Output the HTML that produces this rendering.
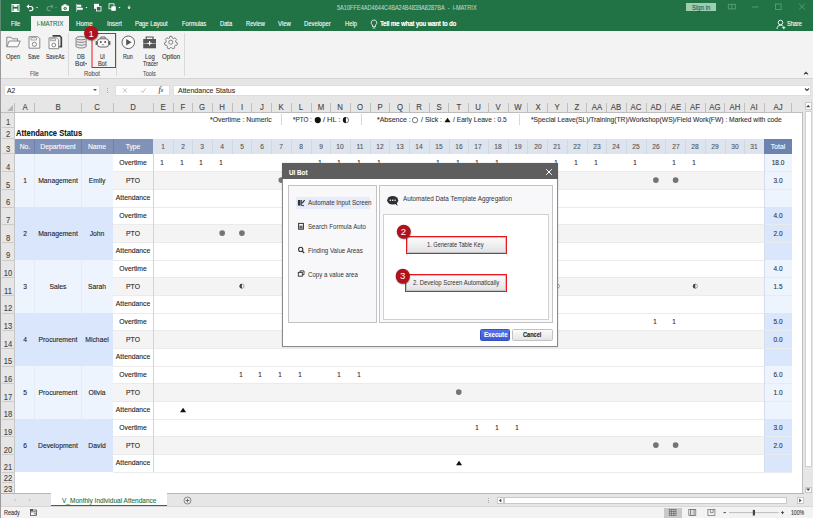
<!DOCTYPE html><html><head><meta charset="utf-8"><title>i-MATRIX</title><style>
*{box-sizing:border-box;margin:0;padding:0}
html,body{width:813px;height:518px;overflow:hidden;background:#fff}
body{font-family:"Liberation Sans","DejaVu Sans",sans-serif;font-size:7px;color:#333;position:relative}
.a{position:absolute}
.t{position:absolute;white-space:nowrap;line-height:1;-webkit-text-stroke:.1px currentColor}
.num{position:absolute;border-radius:50%;background:#b0121b;color:#fff;text-align:center;transform:translate(-50%,-50%);box-shadow:.4px .8px 1.2px rgba(0,0,0,.4)}
.redbox{position:absolute;border:1px solid #e8161d}
</style></head><body>
<div class="a" style="left:0.00px;top:0.00px;width:813.00px;height:31.40px;background:#217346;"></div>
<div class="a" style="left:0.00px;top:0.00px;width:1.20px;height:31.40px;background:#5f8a72;"></div>
<div class="a" style="left:0.00px;top:31.40px;width:1.20px;height:487.00px;background:#9b9b9b;"></div>
<svg class="a" style="left:0;top:0" width="140" height="16" viewBox="0 0 140 16" fill="none" stroke="#fff" stroke-width="1">
<rect x="12" y="4.500" width="7" height="7" /><rect x="13.500" y="4.500" width="4" height="2.300" fill="#fff" stroke="none"/><rect x="13.500" y="8.600" width="4" height="2.900" fill="#fff" stroke="none"/>
<path d="M27.500 6.500h3.300a2 2 0 0 1 0 4.200h-1.500" stroke-width="1.200"/><path d="M29 4.200l-2.600 2.300 2.600 2.300z" fill="#fff" stroke="none"/>
<path d="M36 7l2 0-1 1.300z" fill="#fff" stroke="none"/>
<g opacity=".3"><path d="M52.500 6.500h-3.300a2 2 0 0 0 0 4.200h1.500" stroke-width="1.200"/><path d="M51 4.200l2.600 2.300-2.600 2.300z" fill="#fff" stroke="none"/><path d="M55 7l2 0-1 1.300z" fill="#fff" stroke="none"/></g>
<rect x="61.500" y="5.500" width="7.500" height="5.500" fill="#fff" stroke="none" rx=".8"/><rect x="63.500" y="4.300" width="3" height="1.600" fill="#fff" stroke="none"/><circle cx="65.200" cy="8.300" r="1.600" fill="#217346" stroke="none"/><circle cx="65.200" cy="8.300" r=".7" fill="#fff" stroke="none"/>
<path d="M76.500 3.800v8M77 5h4v1.600h-4M77 8h5.500v1.600H77" fill="#fff" stroke-width=".6"/>
<path d="M85.500 7l2 0-1 1.300z" fill="#fff" stroke="none"/>
<rect x="94" y="3.800" width="5" height="5" fill="#fff" stroke="none"/><rect x="96.500" y="6.500" width="4.500" height="4.500" fill="#217346" stroke="#fff" stroke-width=".8"/>
<rect x="109" y="3.800" width="5" height="5" stroke-width=".8"/><rect x="111.300" y="6.300" width="4.500" height="4.500" fill="#fff" stroke="none"/>
<path d="M118.500 7l2 0-1 1.300z" fill="#fff" stroke="none"/>
<path d="M128 6.200h2.200M128 7.600l2.200 0-1.100 1.400z" fill="#fff" stroke-width=".6"/>
</svg>
<div class="t" style="left:336.50px;top:5px;font-size:6.6px;color:#b9d6c5;transform-origin:0 50%;transform:scaleX(0.849);">5A10FFE4AD4644C4BA24B4839A8287BA&nbsp; - &nbsp;i-MATRIX</div>
<div class="a" style="left:686.40px;top:2.70px;width:29.20px;height:8.80px;background:#9fcdb2;"></div>
<div class="t" style="left:691.80px;top:5px;font-size:6.9px;color:#1d5a37;transform-origin:0 50%;transform:scaleX(0.872);">Sign in</div>
<svg class="a" style="left:720px;top:0" width="93" height="14" viewBox="0 0 93 14" fill="none" stroke="#5fa37c" stroke-width=".8">
<rect x="8.300" y="4.300" width="7" height="4.600"/><path d="M11.800 4.300v4.600"/>
<path d="M32 7h6.500"/>
<rect x="55.500" y="4" width="5.600" height="5.600"/>
<path d="M79 3.800l5.800 5.800M84.800 3.800l-5.800 5.800"/>
</svg>
<div class="a" style="left:31.30px;top:16.00px;width:37.80px;height:16.00px;background:#f3f3f3;"></div>
<div class="t" style="left:10.60px;top:20px;font-size:7.2px;color:#fff;transform-origin:0 50%;transform:scaleX(0.776);">File</div>
<div class="t" style="left:76.30px;top:20px;font-size:7.2px;color:#fff;transform-origin:0 50%;transform:scaleX(0.869);">Home</div>
<div class="t" style="left:106.60px;top:20px;font-size:7.2px;color:#fff;transform-origin:0 50%;transform:scaleX(0.827);">Insert</div>
<div class="t" style="left:134.80px;top:20px;font-size:7.2px;color:#fff;transform-origin:0 50%;transform:scaleX(0.809);">Page Layout</div>
<div class="t" style="left:181.50px;top:20px;font-size:7.2px;color:#fff;transform-origin:0 50%;transform:scaleX(0.810);">Formulas</div>
<div class="t" style="left:219.80px;top:20px;font-size:7.2px;color:#fff;transform-origin:0 50%;transform:scaleX(0.802);">Data</div>
<div class="t" style="left:245.50px;top:20px;font-size:7.2px;color:#fff;transform-origin:0 50%;transform:scaleX(0.796);">Review</div>
<div class="t" style="left:277.90px;top:20px;font-size:7.2px;color:#fff;transform-origin:0 50%;transform:scaleX(0.840);">View</div>
<div class="t" style="left:304.00px;top:20px;font-size:7.2px;color:#fff;transform-origin:0 50%;transform:scaleX(0.817);">Developer</div>
<div class="t" style="left:344.80px;top:20px;font-size:7.2px;color:#fff;transform-origin:0 50%;transform:scaleX(0.810);">Help</div>
<div class="t" style="left:36.90px;top:20px;font-size:7.2px;color:#217346;transform-origin:0 50%;transform:scaleX(0.858);">i-MATRIX</div>
<svg class="a" style="left:370px;top:18.500px" width="8" height="11" viewBox="0 0 8 11" fill="none" stroke="#fff" stroke-width=".8"><path d="M4 1a2.700 2.700 0 0 1 1.500 5v1.600h-3v-1.600A2.700 2.700 0 0 1 4 1zM2.700 9h2.600"/></svg>
<div class="t" style="left:380.00px;top:20px;font-size:7.2px;color:#fff;transform-origin:0 50%;transform:scaleX(0.858);text-shadow:.15px 0 0 #fff;">Tell me what you want to do</div>
<svg class="a" style="left:775.500px;top:18.500px" width="11" height="11" viewBox="0 0 11 11" fill="none" stroke="#fff" stroke-width=".9"><circle cx="4.500" cy="3.500" r="2.300"/><path d="M1 10c0-2.400 1.400-3.800 3.500-3.800 1 0 1.800.3 2.400.8M7.800 7.200v3M6.300 8.700h3"/></svg>
<div class="t" style="left:786.50px;top:20px;font-size:7.2px;color:#fff;transform-origin:0 50%;transform:scaleX(0.781);">Share</div>
<div class="a" style="left:1.00px;top:31.00px;width:812.00px;height:47.30px;background:#f3f3f3;"></div>
<div class="a" style="left:1.00px;top:78.00px;width:812.00px;height:0.80px;background:#d4d4d4;"></div>
<div class="a" style="left:68.10px;top:32.50px;width:0.80px;height:43.00px;background:#dadada;"></div>
<div class="a" style="left:115.60px;top:32.50px;width:0.80px;height:43.00px;background:#dadada;"></div>
<div class="a" style="left:183.50px;top:32.50px;width:0.80px;height:43.00px;background:#dadada;"></div>
<svg class="a" style="left:0;top:32px" width="190" height="22" viewBox="0 0 190 22" fill="none" stroke="#6e6e6e" stroke-width=".8">
<path d="M6.800 14.800V5.200h4.200l1.200 1.600h5.300v2.200"/><path d="M6.800 14.800l2.400-5.800H20.200l-2.400 5.800z" fill="#fafafa"/>
<path d="M29 4.700h8.800l2 2v9.500H29z" fill="#fafafa"/><rect x="31" y="5.800" width="5.400" height="2.200" stroke-width=".6"/><circle cx="34.400" cy="12.300" r="2.100"/>
<path d="M52.500 3.900h7.200l1.600 1.600v9.200h-2" stroke="#444" stroke-width="1.700"/>
<path d="M49 5.800h7.600l2 2v8.900H49z" fill="#fafafa"/><rect x="50.800" y="6.900" width="4.600" height="1.900" stroke-width=".6"/><circle cx="53.800" cy="13" r="1.900"/>
<g stroke="#666" fill="#ececec"><path d="M76 12v2.300c0 .9 2.200 1.700 5.100 1.700s5.100-.8 5.100-1.700V12"/><path d="M76 9.200v2.300c0 .9 2.200 1.700 5.100 1.700s5.100-.8 5.100-1.700V9.200"/><path d="M76 6.400v2.300c0 .9 2.200 1.700 5.100 1.700s5.100-.8 5.100-1.700V6.400"/><ellipse cx="81.100" cy="6.200" rx="5.100" ry="1.700"/></g>
<g stroke="#666"><rect x="97.500" y="6.800" width="11" height="8.200" rx="2.500" fill="#fafafa" stroke-width="1"/><path d="M100.800 6.500V5h4.400v1.500" stroke-width="1"/><circle cx="100.800" cy="10" r=".9" fill="#444" stroke="none"/><circle cx="105.200" cy="10" r=".9" fill="#444" stroke="none"/><path d="M101.800 12.700h2.400" stroke-width=".7"/><path d="M96.300 9v4M109.700 9v4" stroke-width="1.400"/></g>
<circle cx="128.300" cy="10.300" r="6.300" fill="#fafafa" stroke="#555" stroke-width=".9"/><path d="M126.200 7l5.400 3.300-5.400 3.300z" fill="#555" stroke="none"/>
<g><rect x="143.200" y="7" width="12.800" height="9.300" fill="#555" stroke="none"/><path d="M146.200 7V5h6.800v2" stroke="#555" stroke-width="1.200"/><path d="M143.200 11.500h12.800" stroke="#f3f3f3" stroke-width=".5"/><path d="M149.600 9v4.600M147.300 11.300h4.600" stroke="#fff" stroke-width="1.100"/></g>
<g stroke="#777" stroke-width="1" transform="translate(170.800 10.200) scale(.9) translate(-170.800 -10.200)"><circle cx="170.800" cy="10.200" r="2.300"/><path d="M169.500 3.700h2.600l.4 1.900 1.300.6 1.700-.9 1.700 2-1.100 1.500.3 1.400 1.800.8-.6 2.500-1.900.1-.9 1.100.4 1.900-2.300 1.100-1.200-1.500h-1.500l-1.200 1.500-2.300-1.100.4-1.900-.9-1.100-1.900-.1-.6-2.500 1.800-.8.300-1.400-1.100-1.500 1.700-2 1.700.9 1.300-.6z"/></g>
</svg>
<div class="t" style="left:5.80px;top:53px;font-size:7.3px;color:#333;transform-origin:0 50%;transform:scaleX(0.795);">Open</div>
<div class="t" style="left:28.30px;top:53px;font-size:7.3px;color:#333;transform-origin:0 50%;transform:scaleX(0.703);">Save</div>
<div class="t" style="left:45.90px;top:53px;font-size:7.3px;color:#333;transform-origin:0 50%;transform:scaleX(0.731);">SaveAs</div>
<div class="t" style="left:77.20px;top:53px;font-size:7.3px;color:#333;transform-origin:0 50%;transform:scaleX(0.759);">DB</div>
<div class="t" style="left:75.00px;top:60px;font-size:7.3px;color:#333;transform-origin:0 50%;transform:scaleX(0.903);">Bot</div>
<div class="t" style="left:99.60px;top:53px;font-size:7.3px;color:#333;transform-origin:0 50%;transform:scaleX(0.685);">UI</div>
<div class="t" style="left:98.10px;top:60px;font-size:7.3px;color:#333;transform-origin:0 50%;transform:scaleX(0.785);">Bot</div>
<div class="t" style="left:123.20px;top:53px;font-size:7.3px;color:#333;transform-origin:0 50%;transform:scaleX(0.732);">Run</div>
<div class="t" style="left:144.90px;top:53px;font-size:7.3px;color:#333;transform-origin:0 50%;transform:scaleX(0.805);">Log</div>
<div class="t" style="left:142.50px;top:60px;font-size:7.3px;color:#333;transform-origin:0 50%;transform:scaleX(0.716);">Tracer</div>
<div class="t" style="left:161.50px;top:53px;font-size:7.3px;color:#333;transform-origin:0 50%;transform:scaleX(0.846);">Option</div>
<div class="a" style="left:85.300px;top:62.800px;width:0;height:0;border-left:1.700px solid transparent;border-right:1.700px solid transparent;border-top:2px solid #555"></div>
<div class="t" style="left:30.10px;top:71px;font-size:6.8px;color:#555;transform-origin:0 50%;transform:scaleX(0.785);">File</div>
<div class="t" style="left:84.00px;top:71px;font-size:6.8px;color:#555;transform-origin:0 50%;transform:scaleX(0.876);">Robot</div>
<div class="t" style="left:143.20px;top:71px;font-size:6.8px;color:#555;transform-origin:0 50%;transform:scaleX(0.806);">Tools</div>
<svg class="a" style="left:801px;top:70px" width="10" height="6" viewBox="0 0 10 6" fill="none" stroke="#444" stroke-width="1.100"><path d="M3 4.300l2-2 2 2"/></svg>
<svg class="a" style="left:0;top:0" width="200" height="80" viewBox="0 0 200 80"><rect x="92" y="33.500" width="23.500" height="34" fill="none" stroke="#e8161d" stroke-width="1"/></svg>
<div class="num" style="left:91.100px;top:33.400px;width:13.800px;height:13.800px;line-height:15px;font-size:9.500px">1</div>
<div class="a" style="left:1.00px;top:78.80px;width:812.00px;height:22.40px;background:#e6e6e6;"></div>
<div class="a" style="left:3.50px;top:84.50px;width:96.00px;height:11.80px;background:#fff;border:.5px solid #dedede"></div>
<div class="t" style="left:6.50px;top:87px;font-size:7.3px;color:#333;transform-origin:0 50%;transform:scaleX(0.930);">A2</div>
<div class="a" style="left:92.500px;top:89.300px;width:0;height:0;border-left:2px solid transparent;border-right:2px solid transparent;border-top:2.300px solid #555"></div>
<div class="a" style="left:106.50px;top:87.80px;width:0.90px;height:0.90px;background:#aaa;"></div>
<div class="a" style="left:106.50px;top:90.00px;width:0.90px;height:0.90px;background:#aaa;"></div>
<div class="a" style="left:106.50px;top:92.20px;width:0.90px;height:0.90px;background:#aaa;"></div>
<div class="a" style="left:115.10px;top:84.50px;width:55.20px;height:11.80px;background:#fff;border:.5px solid #dedede"></div>
<svg class="a" style="left:115px;top:84px" width="56" height="13" viewBox="0 0 56 13" fill="none" stroke="#b0b0b0" stroke-width=".8"><path d="M8 4.300l3.800 4.200M11.800 4.300l-3.800 4.200"/><path d="M26 6.700l1.700 1.900 3.100-4.300"/></svg>
<div class="t" style="left:158.500px;top:86px;font-size:8px;font-style:italic;font-family:'Liberation Serif',serif;color:#444">f<span style="font-size:5.500px">x</span></div>
<div class="a" style="left:172.70px;top:84.50px;width:638.00px;height:11.80px;background:#fff;border:.5px solid #dedede"></div>
<div class="t" style="left:178.00px;top:87px;font-size:7.3px;color:#333;transform-origin:0 50%;transform:scaleX(0.960);">Attendance Status</div>
<svg class="a" style="left:802.500px;top:87.300px" width="8" height="6" viewBox="0 0 8 6" fill="none" stroke="#444" stroke-width="1.100"><path d="M2 1.500l2 2 2-2"/></svg>
<div class="a" style="left:1.00px;top:101.20px;width:812.00px;height:11.20px;background:#e6e6e6;"></div>
<div class="a" style="left:1.00px;top:111.90px;width:801.60px;height:0.80px;background:#bdbdbd;"></div>
<div class="a" style="left:6.500px;top:104.500px;width:0;height:0;border-left:6.500px solid transparent;border-bottom:6.500px solid #b5b5b5"></div>
<div class="t" style="left:24.70px;top:104px;font-size:8.2px;color:#444;transform:translateX(-50%) scaleX(0.950);">A</div>
<div class="a" style="left:34.20px;top:102.80px;width:0.80px;height:9.00px;background:#c0c0c0;"></div>
<div class="t" style="left:58.05px;top:104px;font-size:8.2px;color:#444;transform:translateX(-50%) scaleX(0.950);">B</div>
<div class="a" style="left:81.10px;top:102.80px;width:0.80px;height:9.00px;background:#c0c0c0;"></div>
<div class="t" style="left:97.45px;top:104px;font-size:8.2px;color:#444;transform:translateX(-50%) scaleX(0.950);">C</div>
<div class="a" style="left:113.00px;top:102.80px;width:0.80px;height:9.00px;background:#c0c0c0;"></div>
<div class="t" style="left:133.30px;top:104px;font-size:8.2px;color:#444;transform:translateX(-50%) scaleX(0.950);">D</div>
<div class="a" style="left:152.80px;top:102.80px;width:0.80px;height:9.00px;background:#c0c0c0;"></div>
<div class="t" style="left:163.06px;top:104px;font-size:8.2px;color:#444;transform:translateX(-50%) scaleX(0.950);">E</div>
<div class="a" style="left:172.51px;top:102.80px;width:0.80px;height:9.00px;background:#c0c0c0;"></div>
<div class="t" style="left:182.77px;top:104px;font-size:8.2px;color:#444;transform:translateX(-50%) scaleX(0.950);">F</div>
<div class="a" style="left:192.23px;top:102.80px;width:0.80px;height:9.00px;background:#c0c0c0;"></div>
<div class="t" style="left:202.48px;top:104px;font-size:8.2px;color:#444;transform:translateX(-50%) scaleX(0.950);">G</div>
<div class="a" style="left:211.94px;top:102.80px;width:0.80px;height:9.00px;background:#c0c0c0;"></div>
<div class="t" style="left:222.20px;top:104px;font-size:8.2px;color:#444;transform:translateX(-50%) scaleX(0.950);">H</div>
<div class="a" style="left:231.65px;top:102.80px;width:0.80px;height:9.00px;background:#c0c0c0;"></div>
<div class="t" style="left:241.91px;top:104px;font-size:8.2px;color:#444;transform:translateX(-50%) scaleX(0.950);">I</div>
<div class="a" style="left:251.36px;top:102.80px;width:0.80px;height:9.00px;background:#c0c0c0;"></div>
<div class="t" style="left:261.62px;top:104px;font-size:8.2px;color:#444;transform:translateX(-50%) scaleX(0.950);">J</div>
<div class="a" style="left:271.08px;top:102.80px;width:0.80px;height:9.00px;background:#c0c0c0;"></div>
<div class="t" style="left:281.33px;top:104px;font-size:8.2px;color:#444;transform:translateX(-50%) scaleX(0.950);">K</div>
<div class="a" style="left:290.79px;top:102.80px;width:0.80px;height:9.00px;background:#c0c0c0;"></div>
<div class="t" style="left:301.05px;top:104px;font-size:8.2px;color:#444;transform:translateX(-50%) scaleX(0.950);">L</div>
<div class="a" style="left:310.50px;top:102.80px;width:0.80px;height:9.00px;background:#c0c0c0;"></div>
<div class="t" style="left:320.76px;top:104px;font-size:8.2px;color:#444;transform:translateX(-50%) scaleX(0.950);">M</div>
<div class="a" style="left:330.22px;top:102.80px;width:0.80px;height:9.00px;background:#c0c0c0;"></div>
<div class="t" style="left:340.47px;top:104px;font-size:8.2px;color:#444;transform:translateX(-50%) scaleX(0.950);">N</div>
<div class="a" style="left:349.93px;top:102.80px;width:0.80px;height:9.00px;background:#c0c0c0;"></div>
<div class="t" style="left:360.19px;top:104px;font-size:8.2px;color:#444;transform:translateX(-50%) scaleX(0.950);">O</div>
<div class="a" style="left:369.64px;top:102.80px;width:0.80px;height:9.00px;background:#c0c0c0;"></div>
<div class="t" style="left:379.90px;top:104px;font-size:8.2px;color:#444;transform:translateX(-50%) scaleX(0.950);">P</div>
<div class="a" style="left:389.35px;top:102.80px;width:0.80px;height:9.00px;background:#c0c0c0;"></div>
<div class="t" style="left:399.61px;top:104px;font-size:8.2px;color:#444;transform:translateX(-50%) scaleX(0.950);">Q</div>
<div class="a" style="left:409.07px;top:102.80px;width:0.80px;height:9.00px;background:#c0c0c0;"></div>
<div class="t" style="left:419.32px;top:104px;font-size:8.2px;color:#444;transform:translateX(-50%) scaleX(0.950);">R</div>
<div class="a" style="left:428.78px;top:102.80px;width:0.80px;height:9.00px;background:#c0c0c0;"></div>
<div class="t" style="left:439.04px;top:104px;font-size:8.2px;color:#444;transform:translateX(-50%) scaleX(0.950);">S</div>
<div class="a" style="left:448.49px;top:102.80px;width:0.80px;height:9.00px;background:#c0c0c0;"></div>
<div class="t" style="left:458.75px;top:104px;font-size:8.2px;color:#444;transform:translateX(-50%) scaleX(0.950);">T</div>
<div class="a" style="left:468.21px;top:102.80px;width:0.80px;height:9.00px;background:#c0c0c0;"></div>
<div class="t" style="left:478.46px;top:104px;font-size:8.2px;color:#444;transform:translateX(-50%) scaleX(0.950);">U</div>
<div class="a" style="left:487.92px;top:102.80px;width:0.80px;height:9.00px;background:#c0c0c0;"></div>
<div class="t" style="left:498.18px;top:104px;font-size:8.2px;color:#444;transform:translateX(-50%) scaleX(0.950);">V</div>
<div class="a" style="left:507.63px;top:102.80px;width:0.80px;height:9.00px;background:#c0c0c0;"></div>
<div class="t" style="left:517.89px;top:104px;font-size:8.2px;color:#444;transform:translateX(-50%) scaleX(0.950);">W</div>
<div class="a" style="left:527.35px;top:102.80px;width:0.80px;height:9.00px;background:#c0c0c0;"></div>
<div class="t" style="left:537.60px;top:104px;font-size:8.2px;color:#444;transform:translateX(-50%) scaleX(0.950);">X</div>
<div class="a" style="left:547.06px;top:102.80px;width:0.80px;height:9.00px;background:#c0c0c0;"></div>
<div class="t" style="left:557.31px;top:104px;font-size:8.2px;color:#444;transform:translateX(-50%) scaleX(0.950);">Y</div>
<div class="a" style="left:566.77px;top:102.80px;width:0.80px;height:9.00px;background:#c0c0c0;"></div>
<div class="t" style="left:577.03px;top:104px;font-size:8.2px;color:#444;transform:translateX(-50%) scaleX(0.950);">Z</div>
<div class="a" style="left:586.48px;top:102.80px;width:0.80px;height:9.00px;background:#c0c0c0;"></div>
<div class="t" style="left:596.74px;top:104px;font-size:8.2px;color:#444;transform:translateX(-50%) scaleX(0.950);">AA</div>
<div class="a" style="left:606.20px;top:102.80px;width:0.80px;height:9.00px;background:#c0c0c0;"></div>
<div class="t" style="left:616.45px;top:104px;font-size:8.2px;color:#444;transform:translateX(-50%) scaleX(0.950);">AB</div>
<div class="a" style="left:625.91px;top:102.80px;width:0.80px;height:9.00px;background:#c0c0c0;"></div>
<div class="t" style="left:636.17px;top:104px;font-size:8.2px;color:#444;transform:translateX(-50%) scaleX(0.950);">AC</div>
<div class="a" style="left:645.62px;top:102.80px;width:0.80px;height:9.00px;background:#c0c0c0;"></div>
<div class="t" style="left:655.88px;top:104px;font-size:8.2px;color:#444;transform:translateX(-50%) scaleX(0.950);">AD</div>
<div class="a" style="left:665.34px;top:102.80px;width:0.80px;height:9.00px;background:#c0c0c0;"></div>
<div class="t" style="left:675.59px;top:104px;font-size:8.2px;color:#444;transform:translateX(-50%) scaleX(0.950);">AE</div>
<div class="a" style="left:685.05px;top:102.80px;width:0.80px;height:9.00px;background:#c0c0c0;"></div>
<div class="t" style="left:695.30px;top:104px;font-size:8.2px;color:#444;transform:translateX(-50%) scaleX(0.950);">AF</div>
<div class="a" style="left:704.76px;top:102.80px;width:0.80px;height:9.00px;background:#c0c0c0;"></div>
<div class="t" style="left:715.02px;top:104px;font-size:8.2px;color:#444;transform:translateX(-50%) scaleX(0.950);">AG</div>
<div class="a" style="left:724.47px;top:102.80px;width:0.80px;height:9.00px;background:#c0c0c0;"></div>
<div class="t" style="left:734.73px;top:104px;font-size:8.2px;color:#444;transform:translateX(-50%) scaleX(0.950);">AH</div>
<div class="a" style="left:744.19px;top:102.80px;width:0.80px;height:9.00px;background:#c0c0c0;"></div>
<div class="t" style="left:754.44px;top:104px;font-size:8.2px;color:#444;transform:translateX(-50%) scaleX(0.950);">AI</div>
<div class="a" style="left:763.90px;top:102.80px;width:0.80px;height:9.00px;background:#c0c0c0;"></div>
<div class="t" style="left:778.00px;top:104px;font-size:8.2px;color:#444;transform:translateX(-50%) scaleX(0.950);">AJ</div>
<div class="a" style="left:791.30px;top:102.80px;width:0.80px;height:9.00px;background:#c0c0c0;"></div>
<div class="a" style="left:14.40px;top:102.80px;width:0.80px;height:9.00px;background:#c0c0c0;"></div>
<div class="a" style="left:1.00px;top:112.50px;width:13.80px;height:380.70px;background:#e6e6e6;"></div>
<div class="a" style="left:14.40px;top:112.50px;width:0.80px;height:380.70px;background:#c6c6c6;"></div>
<div class="t" style="left:7.80px;top:119px;font-size:8.2px;color:#444;transform:translateX(-50%) scaleX(0.930);">1</div>
<div class="a" style="left:2.00px;top:126.70px;width:12.50px;height:0.80px;background:#cbcbcb;"></div>
<div class="t" style="left:7.80px;top:131px;font-size:8.2px;color:#444;transform:translateX(-50%) scaleX(0.930);">2</div>
<div class="a" style="left:2.00px;top:138.20px;width:12.50px;height:0.80px;background:#cbcbcb;"></div>
<div class="t" style="left:7.80px;top:146px;font-size:8.2px;color:#444;transform:translateX(-50%) scaleX(0.930);">3</div>
<div class="a" style="left:2.00px;top:153.40px;width:12.50px;height:0.80px;background:#cbcbcb;"></div>
<div class="t" style="left:7.80px;top:164px;font-size:8.2px;color:#444;transform:translateX(-50%) scaleX(0.930);">4</div>
<div class="a" style="left:2.00px;top:171.17px;width:12.50px;height:0.80px;background:#cbcbcb;"></div>
<div class="t" style="left:7.80px;top:182px;font-size:8.2px;color:#444;transform:translateX(-50%) scaleX(0.930);">5</div>
<div class="a" style="left:2.00px;top:188.83px;width:12.50px;height:0.80px;background:#cbcbcb;"></div>
<div class="t" style="left:7.80px;top:199px;font-size:8.2px;color:#444;transform:translateX(-50%) scaleX(0.930);">6</div>
<div class="a" style="left:2.00px;top:206.50px;width:12.50px;height:0.80px;background:#cbcbcb;"></div>
<div class="t" style="left:7.80px;top:217px;font-size:8.2px;color:#444;transform:translateX(-50%) scaleX(0.930);">7</div>
<div class="a" style="left:2.00px;top:224.17px;width:12.50px;height:0.80px;background:#cbcbcb;"></div>
<div class="t" style="left:7.80px;top:235px;font-size:8.2px;color:#444;transform:translateX(-50%) scaleX(0.930);">8</div>
<div class="a" style="left:2.00px;top:241.83px;width:12.50px;height:0.80px;background:#cbcbcb;"></div>
<div class="t" style="left:7.80px;top:252px;font-size:8.2px;color:#444;transform:translateX(-50%) scaleX(0.930);">9</div>
<div class="a" style="left:2.00px;top:259.50px;width:12.50px;height:0.80px;background:#cbcbcb;"></div>
<div class="t" style="left:7.80px;top:270px;font-size:8.2px;color:#444;transform:translateX(-50%) scaleX(0.930);">10</div>
<div class="a" style="left:2.00px;top:277.17px;width:12.50px;height:0.80px;background:#cbcbcb;"></div>
<div class="t" style="left:7.80px;top:288px;font-size:8.2px;color:#444;transform:translateX(-50%) scaleX(0.930);">11</div>
<div class="a" style="left:2.00px;top:294.83px;width:12.50px;height:0.80px;background:#cbcbcb;"></div>
<div class="t" style="left:7.80px;top:305px;font-size:8.2px;color:#444;transform:translateX(-50%) scaleX(0.930);">12</div>
<div class="a" style="left:2.00px;top:312.50px;width:12.50px;height:0.80px;background:#cbcbcb;"></div>
<div class="t" style="left:7.80px;top:323px;font-size:8.2px;color:#444;transform:translateX(-50%) scaleX(0.930);">13</div>
<div class="a" style="left:2.00px;top:330.17px;width:12.50px;height:0.80px;background:#cbcbcb;"></div>
<div class="t" style="left:7.80px;top:341px;font-size:8.2px;color:#444;transform:translateX(-50%) scaleX(0.930);">14</div>
<div class="a" style="left:2.00px;top:347.83px;width:12.50px;height:0.80px;background:#cbcbcb;"></div>
<div class="t" style="left:7.80px;top:358px;font-size:8.2px;color:#444;transform:translateX(-50%) scaleX(0.930);">15</div>
<div class="a" style="left:2.00px;top:365.50px;width:12.50px;height:0.80px;background:#cbcbcb;"></div>
<div class="t" style="left:7.80px;top:376px;font-size:8.2px;color:#444;transform:translateX(-50%) scaleX(0.930);">16</div>
<div class="a" style="left:2.00px;top:383.17px;width:12.50px;height:0.80px;background:#cbcbcb;"></div>
<div class="t" style="left:7.80px;top:394px;font-size:8.2px;color:#444;transform:translateX(-50%) scaleX(0.930);">17</div>
<div class="a" style="left:2.00px;top:400.83px;width:12.50px;height:0.80px;background:#cbcbcb;"></div>
<div class="t" style="left:7.80px;top:411px;font-size:8.2px;color:#444;transform:translateX(-50%) scaleX(0.930);">18</div>
<div class="a" style="left:2.00px;top:418.50px;width:12.50px;height:0.80px;background:#cbcbcb;"></div>
<div class="t" style="left:7.80px;top:429px;font-size:8.2px;color:#444;transform:translateX(-50%) scaleX(0.930);">19</div>
<div class="a" style="left:2.00px;top:436.17px;width:12.50px;height:0.80px;background:#cbcbcb;"></div>
<div class="t" style="left:7.80px;top:447px;font-size:8.2px;color:#444;transform:translateX(-50%) scaleX(0.930);">20</div>
<div class="a" style="left:2.00px;top:453.83px;width:12.50px;height:0.80px;background:#cbcbcb;"></div>
<div class="t" style="left:7.80px;top:464px;font-size:8.2px;color:#444;transform:translateX(-50%) scaleX(0.930);">21</div>
<div class="a" style="left:2.00px;top:471.50px;width:12.50px;height:0.80px;background:#cbcbcb;"></div>
<div class="t" style="left:7.80px;top:475px;font-size:8.2px;color:#444;transform:translateX(-50%) scaleX(0.930);">22</div>
<div class="a" style="left:2.00px;top:482.20px;width:12.50px;height:0.80px;background:#cbcbcb;"></div>
<div class="t" style="left:7.80px;top:486px;font-size:8.2px;color:#444;transform:translateX(-50%) scaleX(0.930);">23</div>
<div class="a" style="left:2.00px;top:492.80px;width:12.50px;height:0.80px;background:#cbcbcb;"></div>
<div class="t" style="left:209.50px;top:116px;font-size:7.2px;color:#333;transform-origin:0 50%;transform:scaleX(0.954);">*Overtime : Numeric</div>
<div class="t" style="left:293.00px;top:116px;font-size:7.2px;color:#333;transform-origin:0 50%;transform:scaleX(0.876);">*PTO :</div>
<div class="t" style="left:323.10px;top:116px;font-size:7.2px;color:#333;transform-origin:0 50%;transform:scaleX(1.021);">/ HL :</div>
<div class="t" style="left:376.90px;top:116px;font-size:7.2px;color:#333;transform-origin:0 50%;transform:scaleX(0.971);">*Absence :</div>
<div class="t" style="left:420.80px;top:116px;font-size:7.2px;color:#333;transform-origin:0 50%;transform:scaleX(0.977);">/ Sick :</div>
<div class="t" style="left:453.00px;top:116px;font-size:7.2px;color:#333;transform-origin:0 50%;transform:scaleX(0.927);">/ Early Leave : 0.5</div>
<div class="t" style="left:531.00px;top:116px;font-size:7.2px;color:#333;transform-origin:0 50%;transform:scaleX(0.933);">*Special Leave(SL)/Training(TR)/Workshop(WS)/Field Work(FW) : Marked with code</div>
<div class="a" style="left:281.30px;top:114.00px;width:0.70px;height:11.00px;background:#d9d9d9;"></div>
<div class="a" style="left:360.50px;top:114.00px;width:0.70px;height:11.00px;background:#d9d9d9;"></div>
<div class="a" style="left:518.80px;top:114.00px;width:0.70px;height:11.00px;background:#d9d9d9;"></div>
<div class="t" style="left:16.30px;top:129px;font-size:8.6px;color:#111;font-weight:bold;transform-origin:0 50%;transform:scaleX(0.877);">Attendance Status</div>
<div class="a" style="left:14.80px;top:138.60px;width:138.40px;height:15.20px;background:#8092b7;"></div>
<div class="a" style="left:153.20px;top:138.60px;width:611.10px;height:15.20px;background:#dde4ee;"></div>
<div class="a" style="left:764.30px;top:138.60px;width:27.40px;height:15.20px;background:#6d82ae;"></div>
<div class="a" style="left:34.30px;top:138.60px;width:0.70px;height:15.20px;background:#6e82ab;"></div>
<div class="a" style="left:81.20px;top:138.60px;width:0.70px;height:15.20px;background:#6e82ab;"></div>
<div class="a" style="left:113.10px;top:138.60px;width:0.70px;height:15.20px;background:#6e82ab;"></div>
<div class="t" style="left:24.70px;top:143px;font-size:7.3px;color:#fff;transform:translateX(-50%) scaleX(0.930);">No.</div>
<div class="t" style="left:58.05px;top:143px;font-size:7.3px;color:#fff;transform:translateX(-50%) scaleX(0.930);">Department</div>
<div class="t" style="left:97.45px;top:143px;font-size:7.3px;color:#fff;transform:translateX(-50%) scaleX(0.930);">Name</div>
<div class="t" style="left:133.30px;top:143px;font-size:7.3px;color:#fff;transform:translateX(-50%) scaleX(0.930);">Type</div>
<div class="t" style="left:163.06px;top:143px;font-size:7.0px;color:#555;transform:translateX(-50%) scaleX(0.950);">1</div>
<div class="t" style="left:182.77px;top:143px;font-size:7.0px;color:#555;transform:translateX(-50%) scaleX(0.950);">2</div>
<div class="a" style="left:172.61px;top:138.60px;width:0.60px;height:15.20px;background:#d0d8e4;"></div>
<div class="t" style="left:202.48px;top:143px;font-size:7.0px;color:#555;transform:translateX(-50%) scaleX(0.950);">3</div>
<div class="a" style="left:192.33px;top:138.60px;width:0.60px;height:15.20px;background:#d0d8e4;"></div>
<div class="t" style="left:222.20px;top:143px;font-size:7.0px;color:#555;transform:translateX(-50%) scaleX(0.950);">4</div>
<div class="a" style="left:212.04px;top:138.60px;width:0.60px;height:15.20px;background:#d0d8e4;"></div>
<div class="t" style="left:241.91px;top:143px;font-size:7.0px;color:#555;transform:translateX(-50%) scaleX(0.950);">5</div>
<div class="a" style="left:231.75px;top:138.60px;width:0.60px;height:15.20px;background:#d0d8e4;"></div>
<div class="t" style="left:261.62px;top:143px;font-size:7.0px;color:#555;transform:translateX(-50%) scaleX(0.950);">6</div>
<div class="a" style="left:251.46px;top:138.60px;width:0.60px;height:15.20px;background:#d0d8e4;"></div>
<div class="t" style="left:281.33px;top:143px;font-size:7.0px;color:#555;transform:translateX(-50%) scaleX(0.950);">7</div>
<div class="a" style="left:271.18px;top:138.60px;width:0.60px;height:15.20px;background:#d0d8e4;"></div>
<div class="t" style="left:301.05px;top:143px;font-size:7.0px;color:#555;transform:translateX(-50%) scaleX(0.950);">8</div>
<div class="a" style="left:290.89px;top:138.60px;width:0.60px;height:15.20px;background:#d0d8e4;"></div>
<div class="t" style="left:320.76px;top:143px;font-size:7.0px;color:#555;transform:translateX(-50%) scaleX(0.950);">9</div>
<div class="a" style="left:310.60px;top:138.60px;width:0.60px;height:15.20px;background:#d0d8e4;"></div>
<div class="t" style="left:340.47px;top:143px;font-size:7.0px;color:#555;transform:translateX(-50%) scaleX(0.950);">10</div>
<div class="a" style="left:330.32px;top:138.60px;width:0.60px;height:15.20px;background:#d0d8e4;"></div>
<div class="t" style="left:360.19px;top:143px;font-size:7.0px;color:#555;transform:translateX(-50%) scaleX(0.950);">11</div>
<div class="a" style="left:350.03px;top:138.60px;width:0.60px;height:15.20px;background:#d0d8e4;"></div>
<div class="t" style="left:379.90px;top:143px;font-size:7.0px;color:#555;transform:translateX(-50%) scaleX(0.950);">12</div>
<div class="a" style="left:369.74px;top:138.60px;width:0.60px;height:15.20px;background:#d0d8e4;"></div>
<div class="t" style="left:399.61px;top:143px;font-size:7.0px;color:#555;transform:translateX(-50%) scaleX(0.950);">13</div>
<div class="a" style="left:389.45px;top:138.60px;width:0.60px;height:15.20px;background:#d0d8e4;"></div>
<div class="t" style="left:419.32px;top:143px;font-size:7.0px;color:#555;transform:translateX(-50%) scaleX(0.950);">14</div>
<div class="a" style="left:409.17px;top:138.60px;width:0.60px;height:15.20px;background:#d0d8e4;"></div>
<div class="t" style="left:439.04px;top:143px;font-size:7.0px;color:#555;transform:translateX(-50%) scaleX(0.950);">15</div>
<div class="a" style="left:428.88px;top:138.60px;width:0.60px;height:15.20px;background:#d0d8e4;"></div>
<div class="t" style="left:458.75px;top:143px;font-size:7.0px;color:#555;transform:translateX(-50%) scaleX(0.950);">16</div>
<div class="a" style="left:448.59px;top:138.60px;width:0.60px;height:15.20px;background:#d0d8e4;"></div>
<div class="t" style="left:478.46px;top:143px;font-size:7.0px;color:#555;transform:translateX(-50%) scaleX(0.950);">17</div>
<div class="a" style="left:468.31px;top:138.60px;width:0.60px;height:15.20px;background:#d0d8e4;"></div>
<div class="t" style="left:498.18px;top:143px;font-size:7.0px;color:#555;transform:translateX(-50%) scaleX(0.950);">18</div>
<div class="a" style="left:488.02px;top:138.60px;width:0.60px;height:15.20px;background:#d0d8e4;"></div>
<div class="t" style="left:517.89px;top:143px;font-size:7.0px;color:#555;transform:translateX(-50%) scaleX(0.950);">19</div>
<div class="a" style="left:507.73px;top:138.60px;width:0.60px;height:15.20px;background:#d0d8e4;"></div>
<div class="t" style="left:537.60px;top:143px;font-size:7.0px;color:#555;transform:translateX(-50%) scaleX(0.950);">20</div>
<div class="a" style="left:527.45px;top:138.60px;width:0.60px;height:15.20px;background:#d0d8e4;"></div>
<div class="t" style="left:557.31px;top:143px;font-size:7.0px;color:#555;transform:translateX(-50%) scaleX(0.950);">21</div>
<div class="a" style="left:547.16px;top:138.60px;width:0.60px;height:15.20px;background:#d0d8e4;"></div>
<div class="t" style="left:577.03px;top:143px;font-size:7.0px;color:#555;transform:translateX(-50%) scaleX(0.950);">22</div>
<div class="a" style="left:566.87px;top:138.60px;width:0.60px;height:15.20px;background:#d0d8e4;"></div>
<div class="t" style="left:596.74px;top:143px;font-size:7.0px;color:#555;transform:translateX(-50%) scaleX(0.950);">23</div>
<div class="a" style="left:586.58px;top:138.60px;width:0.60px;height:15.20px;background:#d0d8e4;"></div>
<div class="t" style="left:616.45px;top:143px;font-size:7.0px;color:#555;transform:translateX(-50%) scaleX(0.950);">24</div>
<div class="a" style="left:606.30px;top:138.60px;width:0.60px;height:15.20px;background:#d0d8e4;"></div>
<div class="t" style="left:636.17px;top:143px;font-size:7.0px;color:#555;transform:translateX(-50%) scaleX(0.950);">25</div>
<div class="a" style="left:626.01px;top:138.60px;width:0.60px;height:15.20px;background:#d0d8e4;"></div>
<div class="t" style="left:655.88px;top:143px;font-size:7.0px;color:#555;transform:translateX(-50%) scaleX(0.950);">26</div>
<div class="a" style="left:645.72px;top:138.60px;width:0.60px;height:15.20px;background:#d0d8e4;"></div>
<div class="t" style="left:675.59px;top:143px;font-size:7.0px;color:#555;transform:translateX(-50%) scaleX(0.950);">27</div>
<div class="a" style="left:665.44px;top:138.60px;width:0.60px;height:15.20px;background:#d0d8e4;"></div>
<div class="t" style="left:695.30px;top:143px;font-size:7.0px;color:#555;transform:translateX(-50%) scaleX(0.950);">28</div>
<div class="a" style="left:685.15px;top:138.60px;width:0.60px;height:15.20px;background:#d0d8e4;"></div>
<div class="t" style="left:715.02px;top:143px;font-size:7.0px;color:#555;transform:translateX(-50%) scaleX(0.950);">29</div>
<div class="a" style="left:704.86px;top:138.60px;width:0.60px;height:15.20px;background:#d0d8e4;"></div>
<div class="t" style="left:734.73px;top:143px;font-size:7.0px;color:#555;transform:translateX(-50%) scaleX(0.950);">30</div>
<div class="a" style="left:724.57px;top:138.60px;width:0.60px;height:15.20px;background:#d0d8e4;"></div>
<div class="t" style="left:754.44px;top:143px;font-size:7.0px;color:#555;transform:translateX(-50%) scaleX(0.950);">31</div>
<div class="a" style="left:744.29px;top:138.60px;width:0.60px;height:15.20px;background:#d0d8e4;"></div>
<div class="t" style="left:778.00px;top:143px;font-size:7.3px;color:#fff;transform:translateX(-50%) scaleX(0.930);">Total</div>
<div class="a" style="left:14.80px;top:153.90px;width:98.60px;height:53.00px;background:#eef4fd;"></div>
<div class="a" style="left:764.30px;top:153.90px;width:27.40px;height:53.00px;background:#eef4fd;"></div>
<div class="a" style="left:34.30px;top:153.90px;width:0.60px;height:53.00px;background:#e2ebf8;"></div>
<div class="a" style="left:81.20px;top:153.90px;width:0.60px;height:53.00px;background:#e2ebf8;"></div>
<div class="t" style="left:24.70px;top:177px;font-size:7.0px;color:#222;transform:translateX(-50%) scaleX(0.950);">1</div>
<div class="t" style="left:58.05px;top:177px;font-size:7.3px;color:#222;transform:translateX(-50%) scaleX(0.930);">Management</div>
<div class="t" style="left:97.45px;top:177px;font-size:7.3px;color:#222;transform:translateX(-50%) scaleX(0.930);">Emily</div>
<div class="t" style="left:133.30px;top:159px;font-size:7.3px;color:#222;transform:translateX(-50%) scaleX(0.930);">Overtime</div>
<div class="a" style="left:113.40px;top:171.27px;width:678.30px;height:0.60px;background:#ebebeb;"></div>
<div class="t" style="left:778.00px;top:159px;font-size:7.0px;color:#333;transform:translateX(-50%) scaleX(0.930);">18.0</div>
<div class="a" style="left:113.40px;top:171.57px;width:650.90px;height:17.67px;background:#f4f4f4;"></div>
<div class="t" style="left:133.30px;top:177px;font-size:7.3px;color:#222;transform:translateX(-50%) scaleX(0.930);">PTO</div>
<div class="a" style="left:113.40px;top:188.93px;width:678.30px;height:0.60px;background:#ebebeb;"></div>
<div class="t" style="left:778.00px;top:177px;font-size:7.0px;color:#333;transform:translateX(-50%) scaleX(0.930);">3.0</div>
<div class="t" style="left:133.30px;top:194px;font-size:7.3px;color:#222;transform:translateX(-50%) scaleX(0.930);">Attendance</div>
<div class="a" style="left:113.40px;top:206.60px;width:678.30px;height:0.60px;background:#ebebeb;"></div>
<div class="a" style="left:14.80px;top:206.90px;width:98.60px;height:53.00px;background:#d9e6fb;"></div>
<div class="a" style="left:764.30px;top:206.90px;width:27.40px;height:53.00px;background:#d9e6fb;"></div>
<div class="t" style="left:24.70px;top:230px;font-size:7.0px;color:#222;transform:translateX(-50%) scaleX(0.950);">2</div>
<div class="t" style="left:58.05px;top:230px;font-size:7.3px;color:#222;transform:translateX(-50%) scaleX(0.930);">Management</div>
<div class="t" style="left:97.45px;top:230px;font-size:7.3px;color:#222;transform:translateX(-50%) scaleX(0.930);">John</div>
<div class="t" style="left:133.30px;top:212px;font-size:7.3px;color:#222;transform:translateX(-50%) scaleX(0.930);">Overtime</div>
<div class="a" style="left:113.40px;top:224.27px;width:678.30px;height:0.60px;background:#ebebeb;"></div>
<div class="t" style="left:778.00px;top:212px;font-size:7.0px;color:#333;transform:translateX(-50%) scaleX(0.930);">4.0</div>
<div class="a" style="left:113.40px;top:224.57px;width:650.90px;height:17.67px;background:#f4f4f4;"></div>
<div class="t" style="left:133.30px;top:230px;font-size:7.3px;color:#222;transform:translateX(-50%) scaleX(0.930);">PTO</div>
<div class="a" style="left:113.40px;top:241.93px;width:678.30px;height:0.60px;background:#ebebeb;"></div>
<div class="t" style="left:778.00px;top:230px;font-size:7.0px;color:#333;transform:translateX(-50%) scaleX(0.930);">2.0</div>
<div class="t" style="left:133.30px;top:247px;font-size:7.3px;color:#222;transform:translateX(-50%) scaleX(0.930);">Attendance</div>
<div class="a" style="left:113.40px;top:259.60px;width:678.30px;height:0.60px;background:#ebebeb;"></div>
<div class="a" style="left:14.80px;top:259.90px;width:98.60px;height:53.00px;background:#eef4fd;"></div>
<div class="a" style="left:764.30px;top:259.90px;width:27.40px;height:53.00px;background:#eef4fd;"></div>
<div class="a" style="left:34.30px;top:259.90px;width:0.60px;height:53.00px;background:#e2ebf8;"></div>
<div class="a" style="left:81.20px;top:259.90px;width:0.60px;height:53.00px;background:#e2ebf8;"></div>
<div class="t" style="left:24.70px;top:283px;font-size:7.0px;color:#222;transform:translateX(-50%) scaleX(0.950);">3</div>
<div class="t" style="left:58.05px;top:283px;font-size:7.3px;color:#222;transform:translateX(-50%) scaleX(0.930);">Sales</div>
<div class="t" style="left:97.45px;top:283px;font-size:7.3px;color:#222;transform:translateX(-50%) scaleX(0.930);">Sarah</div>
<div class="t" style="left:133.30px;top:265px;font-size:7.3px;color:#222;transform:translateX(-50%) scaleX(0.930);">Overtime</div>
<div class="a" style="left:113.40px;top:277.27px;width:678.30px;height:0.60px;background:#ebebeb;"></div>
<div class="t" style="left:778.00px;top:265px;font-size:7.0px;color:#333;transform:translateX(-50%) scaleX(0.930);">4.0</div>
<div class="a" style="left:113.40px;top:277.57px;width:650.90px;height:17.67px;background:#f4f4f4;"></div>
<div class="t" style="left:133.30px;top:283px;font-size:7.3px;color:#222;transform:translateX(-50%) scaleX(0.930);">PTO</div>
<div class="a" style="left:113.40px;top:294.93px;width:678.30px;height:0.60px;background:#ebebeb;"></div>
<div class="t" style="left:778.00px;top:283px;font-size:7.0px;color:#333;transform:translateX(-50%) scaleX(0.930);">1.5</div>
<div class="t" style="left:133.30px;top:300px;font-size:7.3px;color:#222;transform:translateX(-50%) scaleX(0.930);">Attendance</div>
<div class="a" style="left:113.40px;top:312.60px;width:678.30px;height:0.60px;background:#ebebeb;"></div>
<div class="a" style="left:14.80px;top:312.90px;width:98.60px;height:53.00px;background:#d9e6fb;"></div>
<div class="a" style="left:764.30px;top:312.90px;width:27.40px;height:53.00px;background:#d9e6fb;"></div>
<div class="t" style="left:24.70px;top:336px;font-size:7.0px;color:#222;transform:translateX(-50%) scaleX(0.950);">4</div>
<div class="t" style="left:58.05px;top:336px;font-size:7.3px;color:#222;transform:translateX(-50%) scaleX(0.930);">Procurement</div>
<div class="t" style="left:97.45px;top:336px;font-size:7.3px;color:#222;transform:translateX(-50%) scaleX(0.930);">Michael</div>
<div class="t" style="left:133.30px;top:318px;font-size:7.3px;color:#222;transform:translateX(-50%) scaleX(0.930);">Overtime</div>
<div class="a" style="left:113.40px;top:330.27px;width:678.30px;height:0.60px;background:#ebebeb;"></div>
<div class="t" style="left:778.00px;top:318px;font-size:7.0px;color:#333;transform:translateX(-50%) scaleX(0.930);">5.0</div>
<div class="a" style="left:113.40px;top:330.57px;width:650.90px;height:17.67px;background:#f4f4f4;"></div>
<div class="t" style="left:133.30px;top:336px;font-size:7.3px;color:#222;transform:translateX(-50%) scaleX(0.930);">PTO</div>
<div class="a" style="left:113.40px;top:347.93px;width:678.30px;height:0.60px;background:#ebebeb;"></div>
<div class="t" style="left:778.00px;top:336px;font-size:7.0px;color:#333;transform:translateX(-50%) scaleX(0.930);">0.0</div>
<div class="t" style="left:133.30px;top:353px;font-size:7.3px;color:#222;transform:translateX(-50%) scaleX(0.930);">Attendance</div>
<div class="a" style="left:113.40px;top:365.60px;width:678.30px;height:0.60px;background:#ebebeb;"></div>
<div class="a" style="left:14.80px;top:365.90px;width:98.60px;height:53.00px;background:#eef4fd;"></div>
<div class="a" style="left:764.30px;top:365.90px;width:27.40px;height:53.00px;background:#eef4fd;"></div>
<div class="a" style="left:34.30px;top:365.90px;width:0.60px;height:53.00px;background:#e2ebf8;"></div>
<div class="a" style="left:81.20px;top:365.90px;width:0.60px;height:53.00px;background:#e2ebf8;"></div>
<div class="t" style="left:24.70px;top:389px;font-size:7.0px;color:#222;transform:translateX(-50%) scaleX(0.950);">5</div>
<div class="t" style="left:58.05px;top:389px;font-size:7.3px;color:#222;transform:translateX(-50%) scaleX(0.930);">Procurement</div>
<div class="t" style="left:97.45px;top:389px;font-size:7.3px;color:#222;transform:translateX(-50%) scaleX(0.930);">Olivia</div>
<div class="t" style="left:133.30px;top:371px;font-size:7.3px;color:#222;transform:translateX(-50%) scaleX(0.930);">Overtime</div>
<div class="a" style="left:113.40px;top:383.27px;width:678.30px;height:0.60px;background:#ebebeb;"></div>
<div class="t" style="left:778.00px;top:371px;font-size:7.0px;color:#333;transform:translateX(-50%) scaleX(0.930);">6.0</div>
<div class="a" style="left:113.40px;top:383.57px;width:650.90px;height:17.67px;background:#f4f4f4;"></div>
<div class="t" style="left:133.30px;top:389px;font-size:7.3px;color:#222;transform:translateX(-50%) scaleX(0.930);">PTO</div>
<div class="a" style="left:113.40px;top:400.93px;width:678.30px;height:0.60px;background:#ebebeb;"></div>
<div class="t" style="left:778.00px;top:389px;font-size:7.0px;color:#333;transform:translateX(-50%) scaleX(0.930);">1.0</div>
<div class="t" style="left:133.30px;top:406px;font-size:7.3px;color:#222;transform:translateX(-50%) scaleX(0.930);">Attendance</div>
<div class="a" style="left:113.40px;top:418.60px;width:678.30px;height:0.60px;background:#ebebeb;"></div>
<div class="a" style="left:14.80px;top:418.90px;width:98.60px;height:53.00px;background:#d9e6fb;"></div>
<div class="a" style="left:764.30px;top:418.90px;width:27.40px;height:53.00px;background:#d9e6fb;"></div>
<div class="t" style="left:24.70px;top:442px;font-size:7.0px;color:#222;transform:translateX(-50%) scaleX(0.950);">6</div>
<div class="t" style="left:58.05px;top:442px;font-size:7.3px;color:#222;transform:translateX(-50%) scaleX(0.930);">Development</div>
<div class="t" style="left:97.45px;top:442px;font-size:7.3px;color:#222;transform:translateX(-50%) scaleX(0.930);">David</div>
<div class="t" style="left:133.30px;top:424px;font-size:7.3px;color:#222;transform:translateX(-50%) scaleX(0.930);">Overtime</div>
<div class="a" style="left:113.40px;top:436.27px;width:678.30px;height:0.60px;background:#ebebeb;"></div>
<div class="t" style="left:778.00px;top:424px;font-size:7.0px;color:#333;transform:translateX(-50%) scaleX(0.930);">3.0</div>
<div class="a" style="left:113.40px;top:436.57px;width:650.90px;height:17.67px;background:#f4f4f4;"></div>
<div class="t" style="left:133.30px;top:442px;font-size:7.3px;color:#222;transform:translateX(-50%) scaleX(0.930);">PTO</div>
<div class="a" style="left:113.40px;top:453.93px;width:678.30px;height:0.60px;background:#ebebeb;"></div>
<div class="t" style="left:778.00px;top:442px;font-size:7.0px;color:#333;transform:translateX(-50%) scaleX(0.930);">2.0</div>
<div class="t" style="left:133.30px;top:459px;font-size:7.3px;color:#222;transform:translateX(-50%) scaleX(0.930);">Attendance</div>
<div class="a" style="left:113.40px;top:471.60px;width:678.30px;height:0.60px;background:#ebebeb;"></div>
<div class="a" style="left:153.10px;top:153.90px;width:0.70px;height:318.00px;background:#ccd5e3;"></div>
<div class="a" style="left:763.90px;top:153.90px;width:0.60px;height:318.00px;background:#d5deeb;"></div>
<div class="t" style="left:161.86px;top:160px;font-size:6.5px;color:#222;transform:translateX(-50%) scaleX(0.950);">1</div>
<div class="t" style="left:181.57px;top:160px;font-size:6.5px;color:#222;transform:translateX(-50%) scaleX(0.950);">1</div>
<div class="t" style="left:201.28px;top:160px;font-size:6.5px;color:#222;transform:translateX(-50%) scaleX(0.950);">1</div>
<div class="t" style="left:221.00px;top:160px;font-size:6.5px;color:#222;transform:translateX(-50%) scaleX(0.950);">1</div>
<div class="t" style="left:319.56px;top:160px;font-size:6.5px;color:#222;transform:translateX(-50%) scaleX(0.950);">1</div>
<div class="t" style="left:339.27px;top:160px;font-size:6.5px;color:#222;transform:translateX(-50%) scaleX(0.950);">1</div>
<div class="t" style="left:358.99px;top:160px;font-size:6.5px;color:#222;transform:translateX(-50%) scaleX(0.950);">1</div>
<div class="t" style="left:378.70px;top:160px;font-size:6.5px;color:#222;transform:translateX(-50%) scaleX(0.950);">1</div>
<div class="t" style="left:437.84px;top:160px;font-size:6.5px;color:#222;transform:translateX(-50%) scaleX(0.950);">1</div>
<div class="t" style="left:457.55px;top:160px;font-size:6.5px;color:#222;transform:translateX(-50%) scaleX(0.950);">1</div>
<div class="t" style="left:477.26px;top:160px;font-size:6.5px;color:#222;transform:translateX(-50%) scaleX(0.950);">1</div>
<div class="t" style="left:496.98px;top:160px;font-size:6.5px;color:#222;transform:translateX(-50%) scaleX(0.950);">1</div>
<div class="t" style="left:556.11px;top:160px;font-size:6.5px;color:#222;transform:translateX(-50%) scaleX(0.950);">1</div>
<div class="t" style="left:575.83px;top:160px;font-size:6.5px;color:#222;transform:translateX(-50%) scaleX(0.950);">1</div>
<div class="t" style="left:595.54px;top:160px;font-size:6.5px;color:#222;transform:translateX(-50%) scaleX(0.950);">1</div>
<div class="t" style="left:634.97px;top:160px;font-size:6.5px;color:#222;transform:translateX(-50%) scaleX(0.950);">1</div>
<div class="t" style="left:674.39px;top:160px;font-size:6.5px;color:#222;transform:translateX(-50%) scaleX(0.950);">1</div>
<div class="t" style="left:694.10px;top:160px;font-size:6.5px;color:#222;transform:translateX(-50%) scaleX(0.950);">1</div>
<div class="t" style="left:654.68px;top:319px;font-size:6.5px;color:#222;transform:translateX(-50%) scaleX(0.950);">1</div>
<div class="t" style="left:674.39px;top:319px;font-size:6.5px;color:#222;transform:translateX(-50%) scaleX(0.950);">1</div>
<div class="t" style="left:240.71px;top:372px;font-size:6.5px;color:#222;transform:translateX(-50%) scaleX(0.950);">1</div>
<div class="t" style="left:260.42px;top:372px;font-size:6.5px;color:#222;transform:translateX(-50%) scaleX(0.950);">1</div>
<div class="t" style="left:280.13px;top:372px;font-size:6.5px;color:#222;transform:translateX(-50%) scaleX(0.950);">1</div>
<div class="t" style="left:299.85px;top:372px;font-size:6.5px;color:#222;transform:translateX(-50%) scaleX(0.950);">1</div>
<div class="t" style="left:339.27px;top:372px;font-size:6.5px;color:#222;transform:translateX(-50%) scaleX(0.950);">1</div>
<div class="t" style="left:358.99px;top:372px;font-size:6.5px;color:#222;transform:translateX(-50%) scaleX(0.950);">1</div>
<div class="t" style="left:477.26px;top:425px;font-size:6.5px;color:#222;transform:translateX(-50%) scaleX(0.950);">1</div>
<div class="t" style="left:496.98px;top:425px;font-size:6.5px;color:#222;transform:translateX(-50%) scaleX(0.950);">1</div>
<div class="t" style="left:516.69px;top:425px;font-size:6.5px;color:#222;transform:translateX(-50%) scaleX(0.950);">1</div>
<svg class="a" style="left:0;top:0" width="813" height="518" viewBox="0 0 813 518"><circle cx="317.80" cy="120.10" r="3.10" fill="#111"/><circle cx="345.90" cy="120.10" r="2.70" fill="#fff" stroke="#222" stroke-width=".6"/><path d="M345.90 117.10a3.00 3.00 0 0 0 0 6.00z" fill="#111"/><circle cx="415.00" cy="120.10" r="2.70" fill="#fff" stroke="#333" stroke-width=".65"/><path d="M444.40 122.23h6.20l-3.10 -4.46z" fill="#111"/><circle cx="281.33" cy="180.10" r="2.85" fill="#747474"/><circle cx="655.88" cy="180.10" r="2.85" fill="#747474"/><circle cx="675.59" cy="180.10" r="2.85" fill="#747474"/><circle cx="222.20" cy="233.10" r="2.85" fill="#747474"/><circle cx="241.91" cy="233.10" r="2.85" fill="#747474"/><circle cx="458.75" cy="392.10" r="2.85" fill="#747474"/><circle cx="655.88" cy="445.10" r="2.85" fill="#747474"/><circle cx="675.59" cy="445.10" r="2.85" fill="#747474"/><circle cx="241.91" cy="286.20" r="2.10" fill="#fff" stroke="#666" stroke-width=".6"/><path d="M241.91 283.80a2.40 2.40 0 0 0 0 4.80z" fill="#444"/><circle cx="557.31" cy="286.20" r="2.10" fill="#fff" stroke="#666" stroke-width=".6"/><path d="M557.31 283.80a2.40 2.40 0 0 0 0 4.80z" fill="#444"/><circle cx="695.30" cy="286.20" r="2.10" fill="#fff" stroke="#666" stroke-width=".6"/><path d="M695.30 283.80a2.40 2.40 0 0 0 0 4.80z" fill="#444"/><path d="M180.02 412.17h6.100l-3.050 -4.400z" fill="#111"/><path d="M456.00 465.17h6.100l-3.050 -4.400z" fill="#111"/></svg>
<div class="a" style="left:802.20px;top:112.50px;width:0.80px;height:381.00px;background:#bdbdbd;"></div>
<div class="a" style="left:803.00px;top:101.20px;width:10.40px;height:392.30px;background:#e6e6e6;"></div>
<div class="a" style="left:804.60px;top:102.30px;width:7.10px;height:7.70px;background:#fff;border:.5px solid #c8c8c8"></div>
<svg class="a" style="left:0;top:0" width="813" height="518" viewBox="0 0 813 518"><path d="M806.100 107.200h4.200l-2.100-2.500z" fill="#444"/></svg>
<div class="a" style="left:804.60px;top:110.50px;width:7.10px;height:356.50px;background:#fff;border:.5px solid #cfcfcf"></div>
<div class="a" style="left:804.60px;top:486.50px;width:7.10px;height:6.50px;background:#fff;border:.5px solid #c8c8c8"></div>
<svg class="a" style="left:0;top:0" width="813" height="518" viewBox="0 0 813 518"><path d="M806.100 488.600h4.200l-2.100 2.500z" fill="#444"/></svg>
<div class="a" style="left:1.00px;top:493.20px;width:812.00px;height:13.30px;background:#e6e6e6;"></div>
<div class="a" style="left:1.00px;top:493.00px;width:802.60px;height:0.70px;background:#b5b5b5;"></div>
<div class="a" style="left:51.20px;top:492.80px;width:116.10px;height:12.00px;background:#fff;"></div>
<div class="a" style="left:51.20px;top:504.50px;width:116.10px;height:1.30px;background:#217346;"></div>
<div class="t" style="left:61.70px;top:497px;font-size:7.2px;color:#217346;transform-origin:0 50%;transform:scaleX(0.906);">V_Monthly Individual Attendance</div>
<svg class="a" style="left:10px;top:495px" width="30" height="10" viewBox="0 0 30 10" fill="none" stroke="#bdbdbd" stroke-width=".8"><path d="M5.900 3.600l-1.300 1.400 1.300 1.400M18.800 3.600l1.300 1.400-1.300 1.400"/></svg>
<svg class="a" style="left:183.100px;top:495.500px" width="9" height="9" viewBox="0 0 9 9" fill="none" stroke="#666" stroke-width=".7"><circle cx="4.500" cy="4.500" r="3.500"/><path d="M4.500 2.700v3.600M2.700 4.500h3.600" stroke-width=".9"/></svg>
<div class="a" style="left:504.30px;top:496.60px;width:283.00px;height:7.80px;background:#fff;border:.5px solid #c8c8c8"></div>
<div class="a" style="left:496.50px;top:496.60px;width:7.30px;height:7.80px;background:#fff;border:.5px solid #c8c8c8"></div>
<svg class="a" style="left:0;top:0" width="813" height="518" viewBox="0 0 813 518"><path d="M501.300 498.600v3.800l-2.400-1.900z" fill="#444"/></svg>
<div class="a" style="left:488.20px;top:498.00px;width:0.80px;height:0.80px;background:#aaa;"></div>
<div class="a" style="left:488.20px;top:500.00px;width:0.80px;height:0.80px;background:#aaa;"></div>
<div class="a" style="left:488.20px;top:502.00px;width:0.80px;height:0.80px;background:#aaa;"></div>
<div class="a" style="left:796.80px;top:496.60px;width:6.80px;height:7.80px;background:#fff;border:.5px solid #c8c8c8"></div>
<svg class="a" style="left:0;top:0" width="813" height="518" viewBox="0 0 813 518"><path d="M799.200 498.600v3.800l2.400-1.900z" fill="#444"/></svg>
<div class="a" style="left:1.00px;top:506.50px;width:812.00px;height:11.50px;background:#f3f3f3;"></div>
<div class="a" style="left:1.00px;top:506.20px;width:812.00px;height:0.60px;background:#d8d8d8;"></div>
<div class="t" style="left:4.00px;top:509px;font-size:7px;color:#333;transform-origin:0 50%;transform:scaleX(0.781);">Ready</div>
<svg class="a" style="left:29px;top:508px" width="9" height="9" viewBox="0 0 9 9" fill="none" stroke="#555" stroke-width=".8"><rect x="1.500" y="2" width="6" height="5.500"/><path d="M1.500 3.800h6" /><rect x="1" y="1" width="3" height="2" fill="#555" stroke="none"/><circle cx="6" cy="5.800" r=".8" fill="#555" stroke="none"/></svg>
<div class="a" style="left:663.80px;top:507.60px;width:18.20px;height:10.40px;background:#c9c9c9;"></div>
<svg class="a" style="left:660px;top:506px" width="153" height="12" viewBox="0 0 153 12" fill="none" stroke="#666" stroke-width=".7">
<rect x="9.300" y="3.500" width="6.700" height="6"/><path d="M9.300 5.500h6.700M9.300 7.500h6.700M11.500 3.500v6M13.800 3.500v6"/>
<rect x="28.800" y="3.500" width="7" height="6"/><rect x="30.500" y="3.500" width="3.600" height="6" fill="#ddd"/>
<rect x="47.900" y="3.500" width="7" height="6"/><path d="M50.500 3.500v3.200h2.600V3.500"/>
<path d="M63.500 6.600h2.500" stroke="#444" stroke-width=".9"/>
<path d="M69 6.600h49.700" stroke="#999" stroke-width=".6"/>
<rect x="92.800" y="3.900" width="2.200" height="5.600" fill="#444" stroke="none"/>
<path d="M121 6.600h3M122.500 5.100v3" stroke="#444" stroke-width=".9"/>
</svg>
<div class="t" style="left:790.60px;top:510px;font-size:6.8px;color:#333;transform-origin:0 50%;transform:scaleX(0.759);">100%</div>
<div class="a" style="left:282.30px;top:163.10px;width:275.80px;height:183.50px;background:#fff;border:.7px solid #8a8a8a;box-shadow:0 0 1.500px rgba(0,0,0,.2)"></div>
<div class="a" style="left:282.30px;top:163.10px;width:275.80px;height:15.60px;background:#5e5e5e;"></div>
<div class="t" style="left:288.50px;top:170px;font-size:6.6px;color:#fff;font-weight:bold;transform-origin:0 50%;transform:scaleX(0.952);">UI Bot</div>
<svg class="a" style="left:545px;top:168px" width="8" height="8" viewBox="0 0 8 8" fill="none" stroke="#fff" stroke-width="1"><path d="M1.200 1.200l5.600 5.600M6.800 1.200l-5.600 5.600"/></svg>
<div class="a" style="left:288.00px;top:185.30px;width:88.50px;height:137.90px;background:#f8f8fa;border:.7px solid #c3c3c3"></div>
<div class="a" style="left:379.40px;top:185.30px;width:173.40px;height:137.90px;background:#f8f8fa;border:.7px solid #c3c3c3"></div>
<div class="a" style="left:383.40px;top:214.20px;width:166.00px;height:105.40px;background:#fff;border:.7px solid #d0d0d0"></div>
<div class="a" style="left:296.00px;top:196.50px;width:73.50px;height:12.00px;background:#e6ecfb;"></div>
<div class="t" style="left:307.70px;top:199px;font-size:7.0px;color:#333;transform-origin:0 50%;transform:scaleX(0.888);-webkit-text-stroke:0;">Automate Input Screen</div>
<div class="t" style="left:307.70px;top:223px;font-size:7.0px;color:#333;transform-origin:0 50%;transform:scaleX(0.879);-webkit-text-stroke:0;">Search Formula Auto</div>
<div class="t" style="left:307.70px;top:247px;font-size:7.0px;color:#333;transform-origin:0 50%;transform:scaleX(0.882);-webkit-text-stroke:0;">Finding Value Areas</div>
<div class="t" style="left:307.70px;top:271px;font-size:7.0px;color:#333;transform-origin:0 50%;transform:scaleX(0.877);-webkit-text-stroke:0;">Copy a value area</div>
<svg class="a" style="left:296px;top:196px" width="12" height="84" viewBox="0 0 12 84" fill="none" stroke="#333" stroke-width=".9">
<rect x="1.900" y="4" width="2.700" height="5.600" fill="#333" stroke="none"/><path d="M5.600 4v5.600h2.400" stroke-width=".9"/><path d="M6.300 7.200l2.300-3" stroke-width="1.200"/>
<rect x="2.600" y="27.400" width="4.800" height="5.800" stroke-width="1"/><rect x="3.400" y="29.600" width="3.200" height="3" fill="#666" stroke="none"/>
<circle cx="4.700" cy="53.400" r="2.100" stroke-width="1.100"/><path d="M6.300 55.100l1.900 1.900" stroke-width="1.300"/>
<rect x="2.300" y="76.400" width="4" height="3.800" stroke-width=".9"/><path d="M4 76.400v-1.500h4v3.800h-1.700" stroke-width=".9"/>
</svg>
<svg class="a" style="left:386px;top:194.500px" width="14" height="12" viewBox="0 0 14 12"><ellipse cx="6.700" cy="5.200" rx="5.500" ry="4.300" fill="#2f2f2f"/><path d="M8.500 8.500l3.300 2.500-1.300-3.500z" fill="#2f2f2f"/><circle cx="4.300" cy="5.200" r=".8" fill="#fff"/><circle cx="6.700" cy="5.200" r=".8" fill="#fff"/><circle cx="9.100" cy="5.200" r=".8" fill="#fff"/></svg>
<div class="t" style="left:403.00px;top:195px;font-size:7.0px;color:#333;transform-origin:0 50%;transform:scaleX(0.907);-webkit-text-stroke:0;">Automated Data Template Aggregation</div>
<div class="a" style="left:406.80px;top:236.80px;width:99.40px;height:16.40px;background:linear-gradient(#fbfbfb,#e3e3e6);border:.5px solid #c5c5c5"></div>
<div class="t" style="left:427.30px;top:242px;font-size:6.8px;color:#333;transform-origin:0 50%;transform:scaleX(0.839);-webkit-text-stroke:0;">1. Generate Table Key</div>
<svg class="a" style="left:0;top:0" width="813" height="518" viewBox="0 0 813 518"><rect x="406.5" y="236.5" width="100" height="17" fill="none" stroke="#e8161d" stroke-width="1"/></svg>
<div class="a" style="left:405.80px;top:274.80px;width:100.40px;height:16.40px;background:linear-gradient(#fbfbfb,#e3e3e6);border:.5px solid #c5c5c5"></div>
<div class="t" style="left:412.70px;top:280px;font-size:6.8px;color:#333;transform-origin:0 50%;transform:scaleX(0.882);-webkit-text-stroke:0;">2. Develop Screen Automatically</div>
<svg class="a" style="left:0;top:0" width="813" height="518" viewBox="0 0 813 518"><rect x="405.5" y="274.5" width="101" height="17" fill="none" stroke="#e8161d" stroke-width="1"/></svg>
<div class="num" style="left:403.500px;top:231.600px;width:14.500px;height:14.500px;line-height:14.500px;font-size:9.500px">2</div>
<div class="num" style="left:402.700px;top:276px;width:14.500px;height:14.500px;line-height:14.500px;font-size:9.500px">3</div>
<div class="a" style="left:479.60px;top:328.70px;width:30.20px;height:12.40px;background:linear-gradient(#5570ea,#3f59d6);border:.6px solid #3a50c0;border-radius:1.500px"></div>
<div class="t" style="left:483.60px;top:332px;font-size:6.9px;color:#fff;font-weight:bold;transform-origin:0 50%;transform:scaleX(0.892);">Execute</div>
<div class="a" style="left:512.40px;top:328.70px;width:40.30px;height:12.40px;background:linear-gradient(#fbfbfb,#e4e4e7);border:.6px solid #c2c2c2;border-radius:1.500px"></div>
<div class="t" style="left:523.30px;top:332px;font-size:6.9px;color:#222;font-weight:bold;transform-origin:0 50%;transform:scaleX(0.813);">Cancel</div>
</body></html>
